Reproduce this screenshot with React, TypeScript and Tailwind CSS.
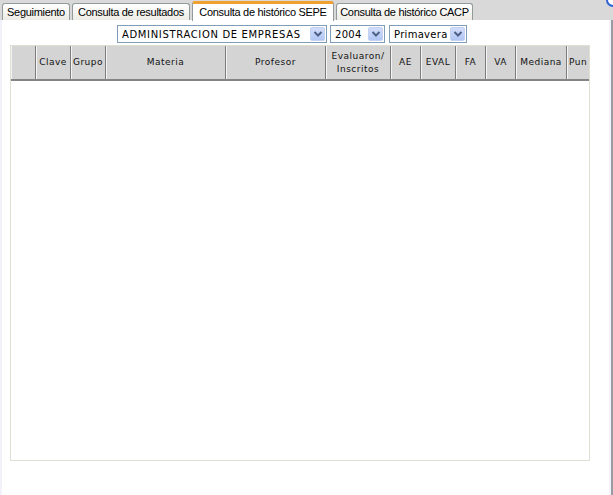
import React from "react";

const tabFont = { fontFamily: '"Liberation Sans", Arial, sans-serif' };
const dejavu = { fontFamily: '"DejaVu Sans", Verdana, sans-serif' };

function Tab({ label, width, active }: { label: string; width: number; active?: boolean }) {
  if (active) {
    return (
      <div
        className="h-[20px] bg-white border-x border-[#919b9c] rounded-t-[3px] border-t-[3px] border-t-[#f0a030] flex items-center justify-center text-[11px] tracking-[-0.3px] text-black relative -mb-[1px]"
        style={{ ...tabFont, width }}
      >
        {label}
      </div>
    );
  }
  return (
    <div
      className="h-[17px] bg-gradient-to-b from-white to-[#ecebe5] border border-b-0 border-[#919b9c] rounded-t-[3px] flex items-center justify-center text-[11px] tracking-[-0.3px] text-black"
      style={{ ...tabFont, width }}
    >
      {label}
    </div>
  );
}

function Select({ label, width, wide }: { label: string; width: number; wide?: boolean }) {
  return (
    <div
      className="h-[18px] border border-[#7f9db9] bg-white flex items-center justify-between"
      style={{ width }}
    >
      <span
        className={"pl-[4px] text-[10px] text-black whitespace-nowrap " + (wide ? "tracking-[0.65px]" : "tracking-[0.3px]")}
        style={dejavu}
      >
        {label}
      </span>
      <div className="w-[15px] h-[14px] mr-[1px] rounded-[2px] bg-gradient-to-b from-[#d2ddfa] to-[#b2c6f4] border border-[#c3d1f3] flex items-center justify-center">
        <svg width="10" height="8" viewBox="0 0 10 8">
          <path d="M1.5 2 L5 5.5 L8.5 2" fill="none" stroke="#4d6185" strokeWidth="2" />
        </svg>
      </div>
    </div>
  );
}

const cols: { label: React.ReactNode; w: number; clip?: boolean }[] = [
  { label: "", w: 25 },
  { label: "Clave", w: 35 },
  { label: "Grupo", w: 35 },
  { label: "Materia", w: 120 },
  { label: "Profesor", w: 100 },
  { label: (<span className="text-center leading-[13px]">Evaluaron/<br />Inscritos</span>), w: 65 },
  { label: "AE", w: 30 },
  { label: "EVAL", w: 35 },
  { label: "FA", w: 30 },
  { label: "VA", w: 30 },
  { label: "Mediana", w: 51 },
  { label: "Pun", w: 22, clip: true },
];

export default function App() {
  return (
    <div className="w-[613px] h-[495px] bg-white flex flex-col relative overflow-hidden">
      <div className="h-[20px] bg-[#d9d9d9] flex items-end gap-[2px] pl-[2px] shrink-0">
        <Tab label="Seguimiento" width={68} />
        <Tab label="Consulta de resultados" width={118} />
        <Tab label="Consulta de histórico SEPE" width={142} active />
        <Tab label="Consulta de histórico CACP" width={137} />
      </div>
      <div className="absolute left-[606px] top-[-7px] w-[14px] h-[14px] rounded-full border-2 border-[#2f62d6] bg-white" />
      <div className="flex flex-1">
        <div className="w-[2px] bg-[#f2f2fa]" />
        <div className="flex-1 flex flex-col">
          <div className="flex mt-[5px] ml-[115px]">
            <Select label="ADMINISTRACION DE EMPRESAS" width={210} wide />
            <div className="w-[3px]" />
            <Select label="2004" width={55} />
            <div className="w-[4px]" />
            <Select label="Primavera" width={78} />
          </div>
          <div className="ml-[8px] mt-[2px] w-[580px] h-[416px] border border-[#e0e0d2] bg-white flex flex-col">
            <div className="flex h-[35px] bg-[#d4d4d4] border-b-2 border-[#848484]">
              {cols.map((c, i) => (
                <div
                  key={i}
                  className={
                    "h-full border-r border-[#7c7c7c] shadow-[inset_1px_0_0_#f4f4f4] flex items-center text-[9px] tracking-[0.5px] text-[#111] overflow-hidden whitespace-nowrap " +
                    (c.clip ? "justify-start pl-[2px] border-r-0" : "justify-center")
                  }
                  style={{ ...dejavu, width: c.w }}
                >
                  {c.label}
                </div>
              ))}
            </div>
          </div>
        </div>
        <div className="w-[2px] bg-[#f2f2fa]" />
        <div className="w-[2px] bg-[#9a9aa2]" />
      </div>
    </div>
  );
}
